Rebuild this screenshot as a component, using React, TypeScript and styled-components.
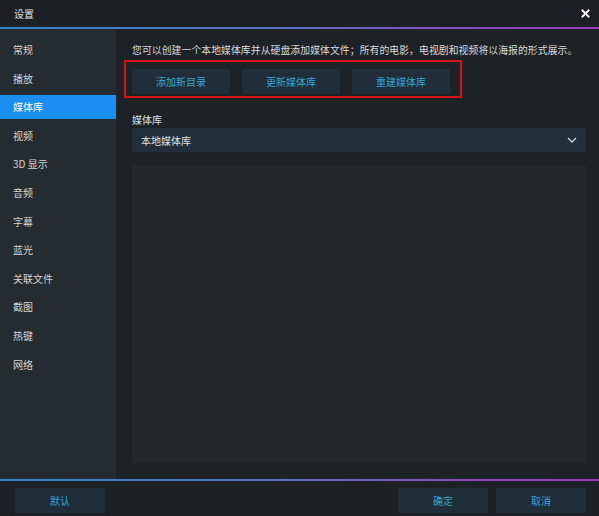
import React from "react";
import styled, { createGlobalStyle } from "styled-components";

const GlobalStyle = createGlobalStyle`
  html, body {
    margin: 0;
    padding: 0;
    background: #1d2125;
  }
  body {
    font-family: "Noto Sans CJK SC", "Noto Sans", sans-serif;
    font-size: 10px;
    color: #d4d8dc;
  }
`;

const MENU = ["常规", "播放", "媒体库", "视频", "3D 显示", "音频", "字幕", "蓝光", "关联文件", "截图", "热键", "网络"];
const ACTIONS = ["添加新目录", "更新媒体库", "重建媒体库"];

export default function App() {
  return (
    <>
      <GlobalStyle />
      <Window>
        <TitleBar>
          <Title>设置</Title>
          <Close>
            <svg width="9" height="9" viewBox="0 0 9 9">
              <path d="M1.5 1.5 L7.5 7.5 M7.5 1.5 L1.5 7.5" stroke="#f2f2f2" strokeWidth="2" strokeLinecap="square" />
            </svg>
          </Close>
        </TitleBar>
        <GradientLine />
        <Body>
          <Sidebar>
            {MENU.map((item, i) => (
              <MenuItem key={i} active={i === 2}>
                {item}
              </MenuItem>
            ))}
          </Sidebar>
          <Main>
            <Description>
              您可以创建一个本地媒体库并从硬盘添加媒体文件；所有的电影，电视剧和视频将以海报的形式展示。
            </Description>
            <Highlight>
              {ACTIONS.map((a) => (
                <ActionButton key={a}>{a}</ActionButton>
              ))}
            </Highlight>
            <Label>媒体库</Label>
            <Select>
              <span>本地媒体库</span>
              <svg width="10" height="6" viewBox="0 0 10 6">
                <path d="M1 1 L5 5 L9 1" stroke="#c8d0d8" strokeWidth="1.4" fill="none" />
              </svg>
            </Select>
            <ListPanel />
          </Main>
        </Body>
        <GradientLine />
        <Footer>
          <ActionButton wide>默认</ActionButton>
          <FooterRight>
            <ActionButton wide>确定</ActionButton>
            <ActionButton wide>取消</ActionButton>
          </FooterRight>
        </Footer>
      </Window>
    </>
  );
}

const Window = styled.div`
  width: 599px;
  height: 516px;
  display: flex;
  flex-direction: column;
  background: #1d2125;
  overflow: hidden;
`;

const TitleBar = styled.div`
  height: 27px;
  display: flex;
  align-items: center;
  justify-content: space-between;
  padding: 0 9px 1px 14px;
  box-sizing: border-box;
  background: #1c2024;
`;

const Title = styled.div`
  font-size: 10px;
  color: #dfe2e5;
`;

const Close = styled.div`
  display: flex;
  align-items: center;
`;

const GradientLine = styled.div`
  height: 2px;
  flex-shrink: 0;
  background: linear-gradient(90deg, #2f86c9 0%, #5a72c4 45%, #8a48be 80%, #9a3cbc 100%);
`;

const Body = styled.div`
  flex: 1;
  display: flex;
  min-height: 0;
`;

const Sidebar = styled.div`
  width: 116px;
  background: #242b31;
  padding-top: 9px;
  display: flex;
  flex-direction: column;
  gap: 4.6px;
`;

const MenuItem = styled.div<{ active?: boolean }>`
  height: 24px;
  line-height: 24px;
  padding-left: 13px;
  font-size: 10px;
  color: ${(p) => (p.active ? "#ffffff" : "#d2d6da")};
  background: ${(p) => (p.active ? "#1b8ef2" : "transparent")};
`;

const Main = styled.div`
  flex: 1;
  padding: 15px 13px 16px 16px;
  display: flex;
  flex-direction: column;
  background: #1d2226;
`;

const Description = styled.div`
  font-size: 9.8px;
  letter-spacing: 0.1px;
  line-height: 12px;
  color: #d8dcdf;
  white-space: nowrap;
`;

const Highlight = styled.div`
  align-self: flex-start;
  margin: 4px 0 0 -8px;
  border: 2px solid #d41414;
  padding: 7px 10px 2px 6px;
  display: flex;
  gap: 12px;
`;

const ActionButton = styled.div<{ wide?: boolean }>`
  width: ${(p) => (p.wide ? "90px" : "98px")};
  height: 25px;
  display: flex;
  align-items: center;
  justify-content: center;
  background: #1f2e39;
  color: #34a5d8;
  font-size: 10px;
`;

const Label = styled.div`
  margin-top: 15px;
  font-size: 10px;
  line-height: 13px;
  color: #dde0e3;
`;

const Select = styled.div`
  margin-top: 2px;
  height: 24px;
  display: flex;
  align-items: center;
  justify-content: space-between;
  padding: 0 9px 0 9px;
  background: #222f3b;
  border-radius: 2px;
  color: #dfe3e6;
  font-size: 10px;
`;

const ListPanel = styled.div`
  margin-top: 13px;
  flex: 1;
  background: #22282c;
`;

const Footer = styled.div`
  height: 35px;
  display: flex;
  align-items: flex-start;
  justify-content: space-between;
  padding: 7px 13px 0 15px;
  box-sizing: border-box;
  background: #1d2125;
`;

const FooterRight = styled.div`
  display: flex;
  gap: 8px;
`;
